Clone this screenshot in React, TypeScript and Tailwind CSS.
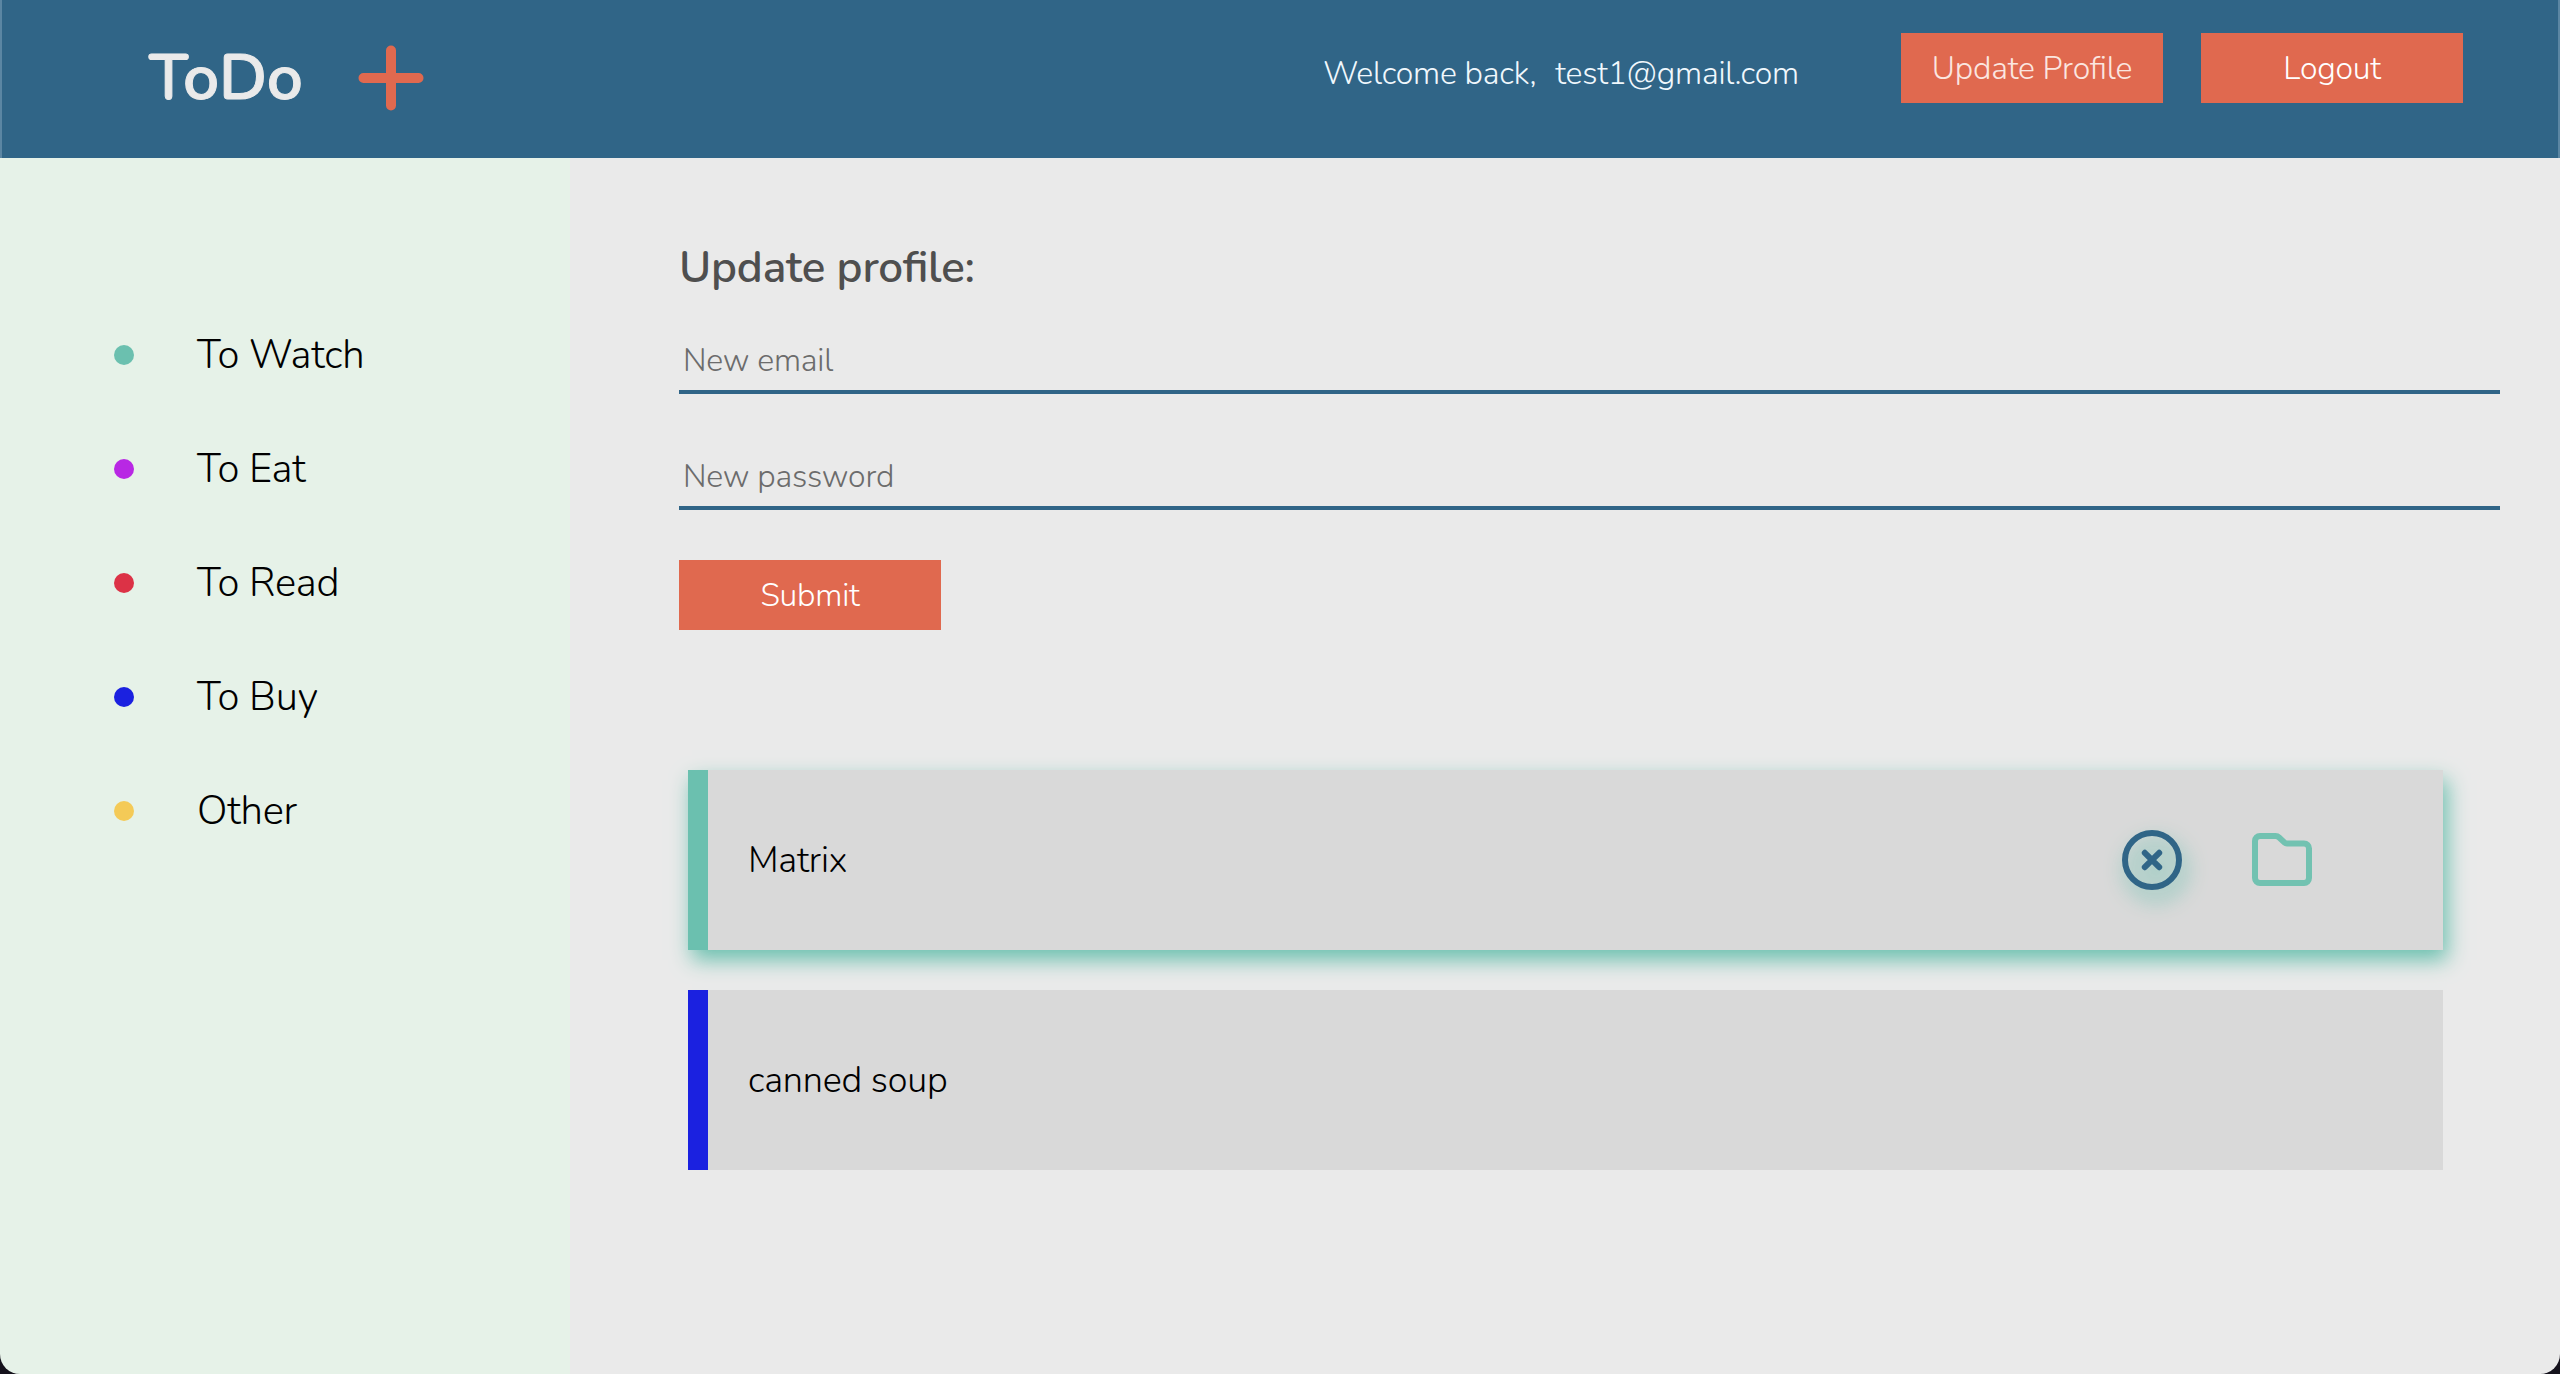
const categories = [
  { label: "To Watch", dot: "bg-[#6bc0af]" },
  { label: "To Eat", dot: "bg-[#b828e4]" },
  { label: "To Read", dot: "bg-[#dc3246]" },
  { label: "To Buy", dot: "bg-[#1b21e0]" },
  { label: "Other", dot: "bg-[#f4ca57]" },
];

function Button({ label, tone = "text-white" }: { label: string; tone?: string }) {
  return (
    <button type="button" className={`h-[70px] w-[262px] bg-[#e0694f] pt-0.5 text-[32px] leading-[68px] ${tone}`}>
      {label}
    </button>
  );
}

function PlusIcon() {
  return (
    <svg width="66" height="66" viewBox="0 0 66 66" fill="none" stroke="#e0694f" strokeWidth="10" strokeLinecap="round">
      <path d="M33 5.5v55M5.5 33h55" />
    </svg>
  );
}

function RemoveIcon() {
  return (
    <svg
      width="60"
      height="60"
      viewBox="0 0 60 60"
      fill="none"
      stroke="#306587"
      strokeWidth="6"
      strokeLinecap="round"
      className="-mt-px overflow-visible drop-shadow-[4px_10px_10px_#6bc0af]"
    >
      <circle cx="30" cy="30" r="27" />
      <path d="M22.8 22.8l14.400 14.400M37.200 22.8L22.8 37.200" />
    </svg>
  );
}

function FolderIcon() {
  return (
    <svg width="60" height="54" viewBox="0 0 60 54" fill="none" stroke="#72c2b1" strokeWidth="6" strokeLinejoin="round">
      <path d="M3 8a5 5 0 0 1 5-5h15.500a5 5 0 0 1 3.500 1.400l5.600 5.200a3.500 3.500 0 0 0 2.400 .900H52a5 5 0 0 1 5 5V45a5 5 0 0 1-5 5H8a5 5 0 0 1-5-5Z" />
    </svg>
  );
}

function Header() {
  return (
    <header className="flex h-[158px] shrink-0 items-start justify-between border-x-2 border-[#5b86a3] bg-[#306587] pr-[95px] pl-[147px]">
      <div className="flex h-full items-center pb-0.5">
        <h1 className="w-[154px] text-[64px] leading-none font-semibold tracking-[-0.2px] text-[#eaeaea] [-webkit-text-stroke:1px_#eaeaea]">
          ToDo
        </h1>
        <div className="ml-[55px]">
          <PlusIcon />
        </div>
      </div>
      <div className="flex items-start pt-[33px] text-[32px] font-light">
        <p className="mt-[17px] mr-[19px] leading-[48px] text-[#f0f8fd]">Welcome back,</p>
        <p className="mt-[17px] mr-[102px] leading-[48px] text-[#f0f8fd]">test1@gmail.com</p>
        <div className="flex gap-[38px]">
          <Button label="Update Profile" tone="text-[#fbe6e0]" />
          <Button label="Logout" />
        </div>
      </div>
    </header>
  );
}

function Sidebar() {
  return (
    <aside className="w-[570px] shrink-0 bg-[#e6f2e8] pt-[140px] pl-[114px]">
      <ul>
        {categories.map((c) => (
          <li key={c.label} className="flex h-[114px] items-center text-[40px] font-light text-black">
            <span className={`mr-[63px] size-5 rounded-full ${c.dot}`} />
            {c.label}
          </li>
        ))}
      </ul>
    </aside>
  );
}

function Field({ type, placeholder }: { type: string; placeholder: string }) {
  return (
    <input
      type={type}
      placeholder={placeholder}
      className="h-[68px] w-full border-b-4 border-[#306587] bg-transparent px-1 pt-1 text-[32px] font-light placeholder:text-[#6c6c6c]"
    />
  );
}

export default function App() {
  return (
    <div className="h-[1374px] w-[2560px] bg-[#15121c] font-[Nunito,Lato,sans-serif] tracking-[-0.2px] [font-feature-settings:'liga'_1]">
      <div className="flex h-full flex-col overflow-hidden rounded-b-[20px]">
        <Header />
        <div className="flex grow">
          <Sidebar />
          <main className="flex grow flex-col bg-[#eaeaea] pr-[60px] pl-[109px] font-light">
            <form className="flex flex-col items-start">
              <h2 className="mt-[80px] text-[44px] leading-[60px] font-semibold text-[#4f4f4f]">Update profile:</h2>
              <div className="mt-[28px] flex w-full flex-col gap-12">
                <Field type="text" placeholder="New email" />
                <Field type="password" placeholder="New password" />
              </div>
              <div className="mt-[50px]">
                <Button label="Submit" />
              </div>
            </form>
            <ul className="mt-[140px] mr-[57px] ml-[9px] flex flex-col gap-10 text-[36px] leading-[50px] text-black">
              <li className="flex h-[180px] items-center border-l-[20px] border-[#6bc0af] bg-[#d9d9d9] pr-[131px] pl-[40px] shadow-[4px_10px_20px_#6bc0af]">
                <span className="grow pt-0.5">Matrix</span>
                <div className="flex items-center gap-[70px]">
                  <RemoveIcon />
                  <FolderIcon />
                </div>
              </li>
              <li className="flex h-[180px] items-center border-l-[20px] border-[#1b21e0] bg-[#d9d9d9] pl-[40px]">
                <span className="grow pt-0.5">canned soup</span>
              </li>
            </ul>
          </main>
        </div>
      </div>
    </div>
  );
}
